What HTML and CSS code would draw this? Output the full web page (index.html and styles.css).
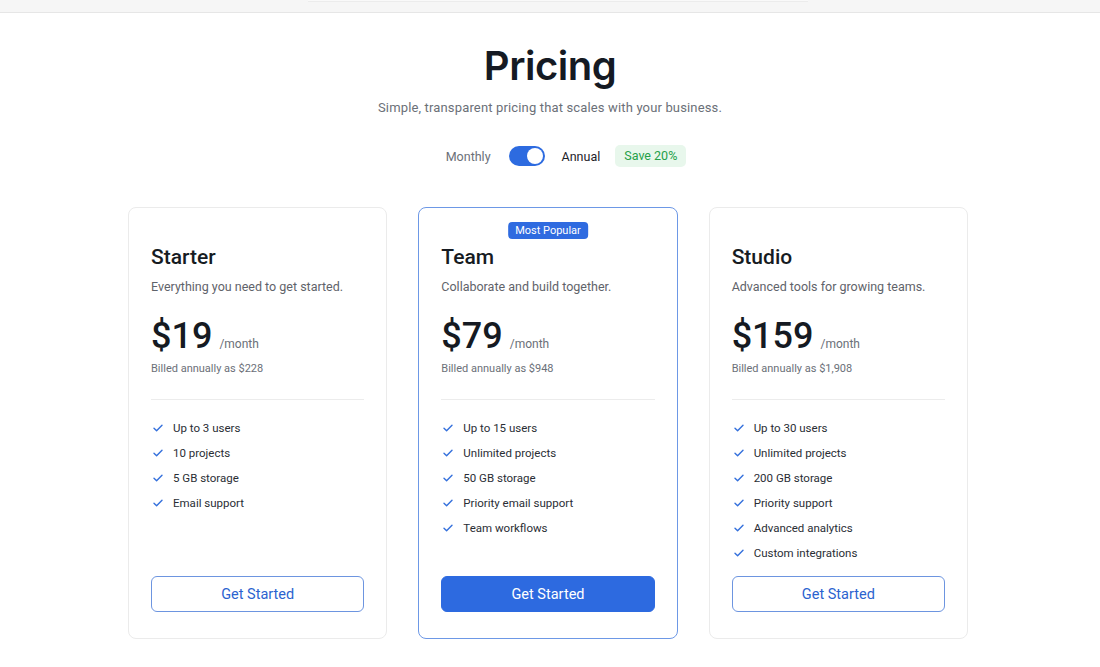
FILE: index.html
```html
<!DOCTYPE html>
<html lang="en">
<head>
<meta charset="utf-8">
<title>Pricing</title>
<link rel="stylesheet" href="styles.css">
</head>
<body>
<div class="topbar"><div class="topbar-tab"></div></div>
<main class="page">
  <header class="hero">
    <h1 class="hero-title">Pricing</h1>
    <p class="hero-sub">Simple, transparent pricing that scales with your business.</p>
    <div class="billing">
      <span class="billing-label">Monthly</span>
      <span class="switch"><span class="switch-knob"></span></span>
      <span class="billing-label billing-label--active">Annual</span>
      <span class="save">Save 20%</span>
    </div>
  </header>

  <section class="plans">
    <article class="plan">
      <h2 class="plan-name">Starter</h2>
      <p class="plan-desc">Everything you need to get started.</p>
      <div class="plan-price"><span class="amount">$19</span><span class="per">/month</span></div>
      <p class="billed">Billed annually as $228</p>
      <hr class="divider">
      <ul class="features">
        <li><svg class="check" viewBox="0 0 12 12"><path d="M2 6.3 4.6 8.8 10 3.2"/></svg>Up to 3 users</li>
        <li><svg class="check" viewBox="0 0 12 12"><path d="M2 6.3 4.6 8.8 10 3.2"/></svg>10 projects</li>
        <li><svg class="check" viewBox="0 0 12 12"><path d="M2 6.3 4.6 8.8 10 3.2"/></svg>5 GB storage</li>
        <li><svg class="check" viewBox="0 0 12 12"><path d="M2 6.3 4.6 8.8 10 3.2"/></svg>Email support</li>
      </ul>
      <button class="btn btn--outline">Get Started</button>
    </article>

    <article class="plan plan--popular">
      <span class="badge">Most Popular</span>
      <h2 class="plan-name">Team</h2>
      <p class="plan-desc">Collaborate and build together.</p>
      <div class="plan-price"><span class="amount">$79</span><span class="per">/month</span></div>
      <p class="billed">Billed annually as $948</p>
      <hr class="divider">
      <ul class="features">
        <li><svg class="check" viewBox="0 0 12 12"><path d="M2 6.3 4.6 8.8 10 3.2"/></svg>Up to 15 users</li>
        <li><svg class="check" viewBox="0 0 12 12"><path d="M2 6.3 4.6 8.8 10 3.2"/></svg>Unlimited projects</li>
        <li><svg class="check" viewBox="0 0 12 12"><path d="M2 6.3 4.6 8.8 10 3.2"/></svg>50 GB storage</li>
        <li><svg class="check" viewBox="0 0 12 12"><path d="M2 6.3 4.6 8.8 10 3.2"/></svg>Priority email support</li>
        <li><svg class="check" viewBox="0 0 12 12"><path d="M2 6.3 4.6 8.8 10 3.2"/></svg>Team workflows</li>
      </ul>
      <button class="btn btn--solid">Get Started</button>
    </article>

    <article class="plan">
      <h2 class="plan-name">Studio</h2>
      <p class="plan-desc">Advanced tools for growing teams.</p>
      <div class="plan-price"><span class="amount">$159</span><span class="per">/month</span></div>
      <p class="billed">Billed annually as $1,908</p>
      <hr class="divider">
      <ul class="features">
        <li><svg class="check" viewBox="0 0 12 12"><path d="M2 6.3 4.6 8.8 10 3.2"/></svg>Up to 30 users</li>
        <li><svg class="check" viewBox="0 0 12 12"><path d="M2 6.3 4.6 8.8 10 3.2"/></svg>Unlimited projects</li>
        <li><svg class="check" viewBox="0 0 12 12"><path d="M2 6.3 4.6 8.8 10 3.2"/></svg>200 GB storage</li>
        <li><svg class="check" viewBox="0 0 12 12"><path d="M2 6.3 4.6 8.8 10 3.2"/></svg>Priority support</li>
        <li><svg class="check" viewBox="0 0 12 12"><path d="M2 6.3 4.6 8.8 10 3.2"/></svg>Advanced analytics</li>
        <li><svg class="check" viewBox="0 0 12 12"><path d="M2 6.3 4.6 8.8 10 3.2"/></svg>Custom integrations</li>
      </ul>
      <button class="btn btn--outline">Get Started</button>
    </article>
  </section>
</main>
</body>
</html>
```

FILE: styles.css
```css
* { box-sizing: border-box; }

body {
  margin: 0;
  background: #ffffff;
  font-family: Roboto, "Liberation Sans", sans-serif;
  color: #111827;
}

.topbar {
  height: 13px;
  background: #f6f6f6;
  border-bottom: 1px solid #e6e6e6;
}

.topbar-tab {
  margin-left: 308px;
  width: 500px;
  height: 2px;
  background: #f9f9f9;
  border-bottom: 1px solid #ececec;
}

.page {
  padding: 30px 0 40px;
}

.hero {
  display: flex;
  flex-direction: column;
  align-items: center;
}

.hero-title {
  margin: 0;
  font-family: Inter, "Liberation Sans", sans-serif;
  font-size: 40px;
  line-height: 46px;
  font-weight: 600;
  letter-spacing: -0.5px;
  color: #151a23;
}

.hero-sub {
  margin: 9px 0 0;
  font-size: 13px;
  line-height: 19px;
  color: #6b7078;
  letter-spacing: 0.15px;
}

.billing {
  margin-top: 28px;
  padding-left: 32px;
  display: flex;
  align-items: center;
  font-size: 12.5px;
}

.billing-label {
  color: #6b7078;
}

.billing-label--active {
  color: #1d2129;
}

.switch {
  margin: 0 17px 0 18px;
  width: 36px;
  height: 20px;
  border-radius: 10px;
  background: #2d6be0;
  display: flex;
  align-items: center;
  justify-content: flex-end;
  padding: 2px;
}

.switch-knob {
  width: 16px;
  height: 16px;
  border-radius: 50%;
  background: #ffffff;
}

.save {
  margin-left: 15px;
  padding: 0 9px;
  height: 22px;
  line-height: 22px;
  border-radius: 5px;
  background: #e8f7ec;
  color: #25a049;
  font-size: 12.5px;
}

.plans {
  margin: 40px auto 0;
  width: 840px;
  display: grid;
  grid-template-columns: repeat(3, 1fr);
  gap: 31px;
  position: relative;
  left: -2px;
}

.plan {
  position: relative;
  display: flex;
  flex-direction: column;
  padding: 35px 22px 26px;
  border: 1px solid #ebebeb;
  border-radius: 8px;
  background: #ffffff;
}

.plan--popular {
  border-color: #6d98e6;
}

.badge {
  position: absolute;
  top: 14px;
  left: 50%;
  transform: translateX(-50%);
  height: 17px;
  line-height: 17px;
  padding: 0 7px;
  border-radius: 4px;
  background: #2f6be0;
  color: #ffffff;
  font-size: 11px;
  white-space: nowrap;
}

.plan-name {
  margin: 0;
  font-size: 21px;
  line-height: 28px;
  font-weight: 500;
  color: #161b22;
}

.plan-desc {
  margin: 6px 0 0;
  font-size: 12.5px;
  line-height: 20px;
  color: #5f636a;
}

.plan-price {
  margin-top: 19px;
  display: flex;
  align-items: baseline;
  height: 40px;
}

.amount {
  font-size: 36px;
  line-height: 40px;
  font-weight: 500;
  color: #151a22;
}

.per {
  margin-left: 7px;
  font-size: 12px;
  color: #6b7078;
}

.billed {
  margin: 5px 0 0;
  font-size: 11px;
  line-height: 16px;
  color: #6b7078;
}

.divider {
  margin: 22px 0 0;
  border: 0;
  border-top: 1px solid #ececec;
}

.features {
  list-style: none;
  margin: 15px 0 11px;
  padding: 0;
}

.features li {
  display: flex;
  align-items: center;
  height: 25px;
  font-size: 11.5px;
  color: #2a2e35;
}

.check {
  width: 12px;
  height: 12px;
  margin: 0 9px 0 1px;
  fill: none;
  stroke: #3470dc;
  stroke-width: 1.4;
  stroke-linecap: round;
  stroke-linejoin: round;
}

.btn {
  margin-top: auto;
  height: 36px;
  border-radius: 6px;
  font-family: inherit;
  font-size: 14.5px;
  cursor: pointer;
}

.btn--outline {
  background: #ffffff;
  border: 1px solid #6d95e0;
  color: #2b63cf;
}

.btn--solid {
  background: #2d6ae0;
  border: 1px solid #2d6ae0;
  color: #ffffff;
}
```
